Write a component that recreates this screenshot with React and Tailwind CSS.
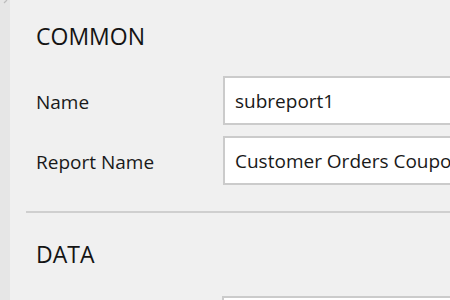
import React from "react";

function Field({ label, value }) {
  return (
    <div className="flex items-start h-[49px]">
      <div className="w-[187px] shrink-0 pt-[14px] text-[19px] leading-[24px] text-[#191919]">{label}</div>
      <div className="w-[300px] shrink-0 h-[49px] border-2 border-[#cbcbcb] bg-white pl-[10px] pt-[11px] text-[19px] leading-[24px] text-[#191919] whitespace-nowrap overflow-hidden">
        {value}
      </div>
    </div>
  );
}

export default function App() {
  return (
    <div
      className="w-[450px] h-[300px] overflow-hidden flex bg-[#f0f0f0]"
      style={{ fontFamily: '"Open Sans", "Noto Sans", sans-serif' }}
    >
      <div className="w-[10px] shrink-0 bg-[#e6e6e6] relative">
        <svg className="absolute left-[2px] top-0" width="6" height="6" viewBox="0 0 6 6">
          <path d="M5 0 L2 3" stroke="#bdbdbd" strokeWidth="1.2" fill="none" />
        </svg>
      </div>
      <div className="flex-1 pl-[16px] min-w-0">
        <div className="pl-[10px]">
          <div className="pt-[20px] text-[23px] leading-[32px] font-medium text-[#141414]">COMMON</div>
          <div className="mt-[24px] flex flex-col gap-[11px]">
            <Field label="Name" value="subreport1" />
            <Field label="Report Name" value="Customer Orders Coupon" />
          </div>
        </div>
        <div className="mt-[26px] h-[2px] bg-[#cfcfcf]" />
        <div className="pl-[10px]">
          <div className="mt-[25px] text-[23px] leading-[32px] font-medium text-[#141414]">DATA</div>
          <div className="mt-[26px] flex">
            <div className="w-[186px] shrink-0" />
            <div className="w-[300px] shrink-0 h-[49px] border-2 border-[#cbcbcb] bg-white" />
          </div>
        </div>
      </div>
    </div>
  );
}
